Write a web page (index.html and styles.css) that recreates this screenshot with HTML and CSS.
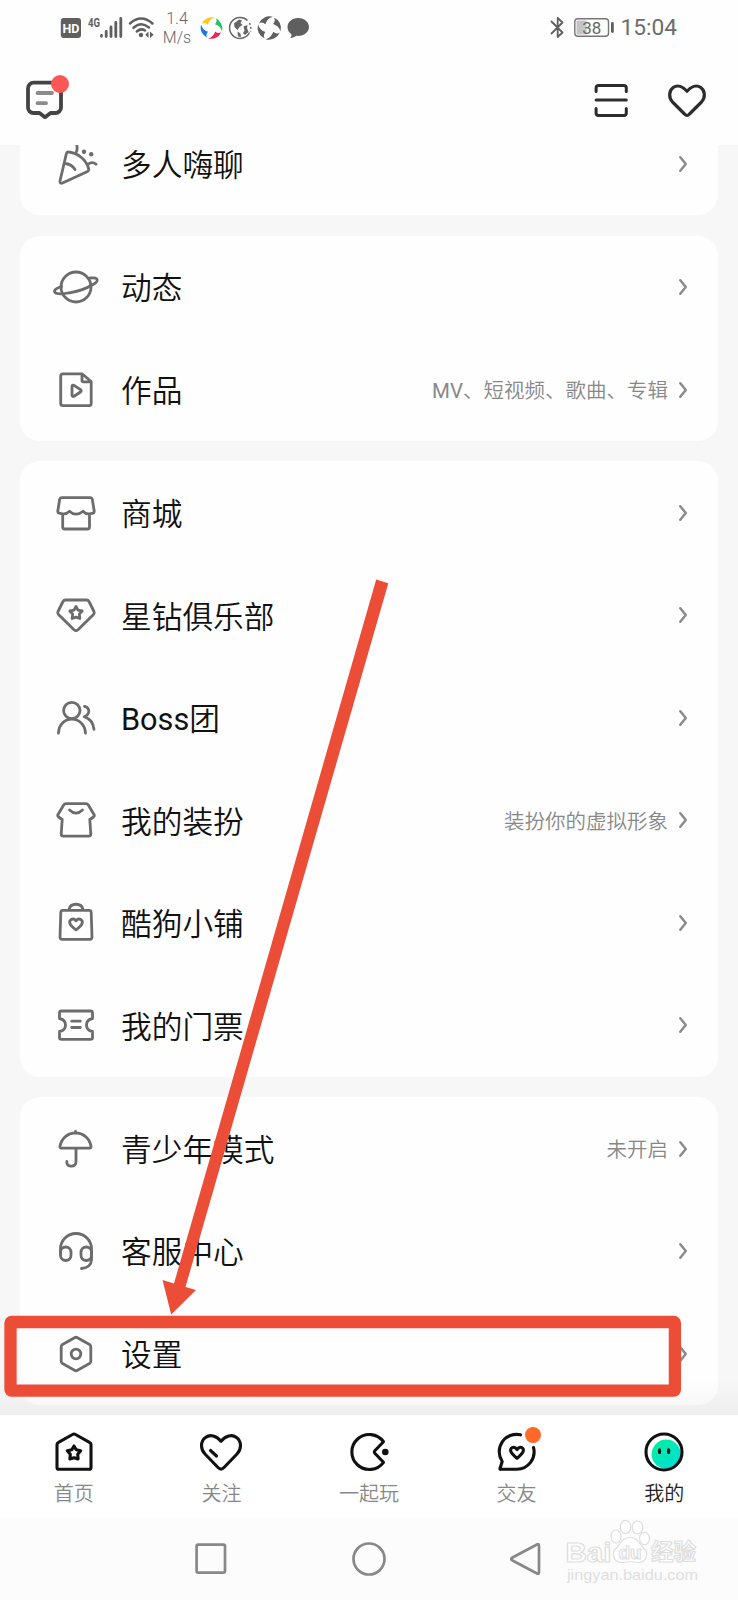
FILE: index.html
```html
<!DOCTYPE html>
<html lang="zh-CN">
<head>
<meta charset="utf-8">
<title>我的</title>
<link rel="stylesheet" href="styles.css">
</head>
<body>
<div class="screen">
  <header class="top">
    <div class="status">
      <svg class="status-signal" viewBox="60 0 96 56">
        <rect x="60.8" y="18" width="20.2" height="20" rx="3" fill="#5f5f5f"/>
        <text x="70.9" y="32.800" text-anchor="middle" class="hd">HD</text>
        <text x="88" y="26.500" class="net" textLength="12" lengthAdjust="spacingAndGlyphs">4G</text>
        <g stroke="#5f5f5f" stroke-width="2.800" stroke-linecap="round"><path d="M101.500 35.500v.8M106.200 31.500v5M111 27v9.500M115.800 22.500v14M120.800 18.500v18"/></g>
        <g fill="none" stroke="#5f5f5f" stroke-width="2.500" stroke-linecap="round"><path d="M130 23.500Q141 13.500 152.500 23.500M133.500 27.800Q141 21 149 27.500M136.800 31.500Q141 27.800 145 30.500"/></g>
        <circle cx="141" cy="35" r="2.200" fill="#5f5f5f"/>
        <path d="M148.500 31.500v6.500l-3.200-3.200zM150 38v-6.500l3.600 3.200z" fill="#5f5f5f"/>
      </svg>
      <div class="speed"><span>1.4</span><span>M/s</span></div>
      <svg class="status-apps" viewBox="200 0 112 56">
        <defs><path id="blade" d="M-10.300-2.500A10.800 10.800 0 0 1 1.500-10.800Q-3.500-8.500-4.200-2.800Q-7.500-5-10.300-2.500z"/></defs>
        <g transform="translate(211.500 28) rotate(10)">
          <use href="#blade" fill="#ffc916"/><use href="#blade" fill="#23c16b" transform="rotate(90)"/><use href="#blade" fill="#ee2157" transform="rotate(180)"/><use href="#blade" fill="#1678ea" transform="rotate(270)"/>
        </g>
        <g fill="none" stroke="#666"><path d="M247.500 20.500A10.500 10.500 0 1 0 249.500 32.500" stroke-width="1.500"/><path d="M249.500 23q2 4 1 8.500" stroke-width="1.500" stroke-dasharray="2 2"/></g>
        <path d="M234 23.500l5-4 3 1-1.500 2.500 2 2-3 2-2 3-3-3zM243.500 26.500l4-1.500-.5 3 1.500 4-3.500 3-2-2 1.500-2.500zM237.500 31.500l3 2 .5 3.500-3-.5z" fill="#666"/>
        <g fill="#5f5f5f" transform="translate(269.300 28) rotate(10) scale(1.080)">
          <use href="#blade"/><use href="#blade" transform="rotate(90)"/><use href="#blade" transform="rotate(180)"/><use href="#blade" transform="rotate(270)"/>
        </g>
        <path d="M298.200 18C292 18 287.500 22 287.500 27c0 3.200 1.500 5.600 3.900 7.200.3 1.700-.4 3-1.200 3.800 2.800-.1 4.600-1 6.100-2.200 7 .7 12.700-3.300 12.700-8.800 0-5-4.600-9-10.800-9z" fill="#5f5f5f"/>
      </svg>
      <svg class="status-right" viewBox="548 0 70 56">
        <path d="M551.500 21.500l11 11-4.800 4.500V18l4.800 4.500-11 11" fill="none" stroke="#5f5f5f" stroke-width="1.800" stroke-linejoin="round" stroke-linecap="round"/>
        <rect x="574.800" y="18.700" width="33.700" height="17.600" rx="3" fill="#fff" stroke="#777" stroke-width="1.400"/>
        <rect x="576.500" y="20.500" width="10" height="14" fill="#c4c4c4"/>
        <text x="591.700" y="33.700" text-anchor="middle" class="battery">38</text>
        <path d="M612.400 23.500v8" stroke="#5f5f5f" stroke-width="2.800" stroke-linecap="round"/>
      </svg>
      <span class="clock">15:04</span>
    </div>
    <div class="actions">
      <span class="message">
        <svg width="40" height="44" viewBox="25 78 40 44" fill="none" stroke-linecap="round" stroke-linejoin="round">
          <path d="M33.500 82.700h22a5.500 5.500 0 0 1 5.500 5.500v19.300a5.500 5.500 0 0 1-5.500 5.500H50.500L45 117.200 39.500 113H33.500a5.500 5.500 0 0 1-5.500-5.500V88.200a5.500 5.500 0 0 1 5.500-5.500z" stroke="#444" stroke-width="3.800"/>
          <path d="M37.500 93h14.500M37.500 103.200h8.500" stroke="#8b8b8b" stroke-width="3.800"/>
        </svg>
        <i class="dot"></i>
      </span>
      <svg class="scan" width="36" height="40" viewBox="593 80 36 40" fill="none" stroke="#2d2d2d" stroke-width="3" stroke-linecap="round" stroke-linejoin="round"><path d="M596.100 91.500V88q0-2.500 2.500-2.500h25.200q2.500 0 2.500 2.500v3.500M596.100 100h30.200M596.100 108.500v4.500q0 2.500 2.500 2.500h25.200q2.500 0 2.500-2.500v-4.500"/></svg>
      <svg width="42" height="40" viewBox="666 80 42 40" fill="none" stroke="#2d2d2d" stroke-width="3.200" stroke-linejoin="round"><path d="M687 91.200C683 86.500 677.500 84.500 673.200 87.500 668.500 91 668.700 98 672.500 102L684.500 114Q687 116.700 689.500 114L701.500 102C705.300 98 705.500 91 700.800 87.500 696.500 84.500 691 86.500 687 91.200z"/></svg>
    </div>
  </header>

  <main class="list">
    <section class="card">
      <div class="row">
        <svg class="icon" viewBox="-24 -24 48 48"><path d="M-7.500-12Q-9.200-12.200-9.600-10.500L-16 17Q-16.200 20-13.500 19L11.500 7.500Q13.200 6.500 12.600 4.500C10-4.500 2-11-7.500-12zM-10.500-.5Q-4 .5-1 5.500M.5-20Q1.800-16 .5-12.500M12 .3Q16-3 20 .2"/><g class="solid"><circle cx="8" cy="-12.200" r="2.200"/><circle cx="15.200" cy="-9.800" r="2.200"/></g></svg>
        <span class="title">多人嗨聊</span><svg class="chevron" viewBox="0 0 10 18"><path d="M2.300 2.300l5.500 6.700-5.500 6.700"/></svg>
      </div>
    </section>

    <section class="card">
      <div class="row">
        <svg class="icon" viewBox="-24 -24 48 48"><circle r="15"/><path d="M-14.500-.5C-20 1-22.500 3.500-21 5.500C-17.500 8.700 5 5 15-1.500C23-5.500 24-10 14-9"/></svg>
        <span class="title">动态</span><svg class="chevron" viewBox="0 0 10 18"><path d="M2.300 2.300l5.500 6.700-5.500 6.700"/></svg>
      </div>
      <div class="row">
        <svg class="icon" viewBox="-24 -24 48 48"><path d="M6-16.200H-13Q-15.300-16.200-15.300-14V13.500Q-15.300 15.700-13 15.700H13Q15.200 15.700 15.200 13.500V-8.500ZM6-16.200V-9.500Q6-8.200 7.500-8.200H15.200M-4-3.500V5Q-4 7.200-2 6.200L4.500 2Q6 .8 4.500-.3L-2-4.700Q-4-5.500-4-3.500z"/></svg>
        <span class="title">作品</span><span class="note"><span class="latin">MV</span>、短视频、歌曲、专辑</span><svg class="chevron" viewBox="0 0 10 18"><path d="M2.300 2.300l5.500 6.700-5.500 6.700"/></svg>
      </div>
    </section>

    <section class="card">
      <div class="row">
        <svg class="icon" viewBox="-24 -24 48 48"><path d="M-14.500-15.300H14.500Q16-15.300 16.300-13.800L18.200-2Q18.400 0 17 .2L13.500.8Q10 1.500 7-1.800Q3.500 1.200 0 1.200Q-3.500 1.200-6.500-1.800Q-10 1.500-13.500.8L-17 .2Q-18.400 0-18.200-2L-16.300-13.800Q-16-15.300-14.500-15.300zM-13.300 1V14Q-13.300 16-11.300 16H11.500Q13.500 16 13.500 14V1"/></svg>
        <span class="title">商城</span><svg class="chevron" viewBox="0 0 10 18"><path d="M2.300 2.300l5.500 6.700-5.500 6.700"/></svg>
      </div>
      <div class="row">
        <svg class="icon" viewBox="-24 -24 48 48"><path d="M-10.500-15H10.500Q12.200-15 13-13.500L18-3.500Q18.800-2 17.500-.5L2 14.800Q0 16.500-2 14.800L-17.500-.5Q-18.800-2-18-3.500L-13-13.500Q-12.200-15-10.500-15zM0-8.500L2-4.800 6.200-4 3.300-.9 3.900 3.500 0 2.200-3.900 3.500-3.300-.9-6.200-4-2-4.800z"/></svg>
        <span class="title">星钻俱乐部</span><svg class="chevron" viewBox="0 0 10 18"><path d="M2.300 2.300l5.500 6.700-5.500 6.700"/></svg>
      </div>
      <div class="row">
        <svg class="icon" viewBox="-24 -24 48 48"><circle cx="-4.200" cy="-7.500" r="8.200"/><path d="M-17.500 15.200C-17-3.500 8.500-3.500 9.500 15.200M8.500-11.700C14-10.500 14.500-3.500 8.200-1.200C14.500 1 17.500 5.500 18 11.300"/></svg>
        <span class="title"><span class="latin">Boss</span>团</span><svg class="chevron" viewBox="0 0 10 18"><path d="M2.300 2.300l5.500 6.700-5.500 6.700"/></svg>
      </div>
      <div class="row">
        <svg class="icon" viewBox="-24 -24 48 48"><path d="M-10-16.300H10Q11.500-16.300 12.300-15L18-5.500Q18.800-4 17.500-3L13.800-.5 14.800 14Q14.800 16.200 12.500 16.200H-12.500Q-14.800 16.200-14.800 14L-13.800-.5-17.500-3Q-18.800-4-18-5.500L-12.300-15Q-11.500-16.300-10-16.300zM-6.500-10Q0-3.800 6.500-10"/></svg>
        <span class="title">我的装扮</span><span class="note">装扮你的虚拟形象</span><svg class="chevron" viewBox="0 0 10 18"><path d="M2.300 2.300l5.500 6.700-5.500 6.700"/></svg>
      </div>
      <div class="row">
        <svg class="icon" viewBox="-24 -24 48 48"><path d="M-13-12.700H13Q15-12.700 15.200-10.700L16 14Q16 16.300 13.800 16.300H-13.800Q-16 16.300-16 14L-15.200-10.700Q-15-12.700-13-12.700zM-7-13.500C-5.500-20.500 5.500-20.500 7-13.500M0-2.200C-3-6-7.500-3-6 .8Q-5.200 3 0 7Q5.200 3 6 .8C7.500-3 3-6 0-2.200z"/></svg>
        <span class="title">酷狗小铺</span><svg class="chevron" viewBox="0 0 10 18"><path d="M2.300 2.300l5.500 6.700-5.500 6.700"/></svg>
      </div>
      <div class="row">
        <svg class="icon" viewBox="-24 -24 48 48"><path d="M-14.500-14H14.500Q16.500-14 16.500-12V-6.500C8.500-5 8.500 5 16.500 6.500V12.500Q16.500 14.300 14.500 14.300H-14.500Q-16.500 14.300-16.500 12.500V6.500C-8.500 5-8.500-5-16.500-6.500V-12Q-16.500-14-14.500-14zM-4.300-3.800H4.300M-4.300 2.500H4.300"/></svg>
        <span class="title">我的门票</span><svg class="chevron" viewBox="0 0 10 18"><path d="M2.300 2.300l5.500 6.700-5.500 6.700"/></svg>
      </div>
    </section>

    <section class="card">
      <div class="row">
        <svg class="icon" viewBox="-24 -24 48 48"><path d="M-14.500-.8Q-16.300-.8-16-2.700C-13-20.500 12-20.500 15-2.700Q15.300-.8 13.500-.8zM-.5-16V-17.500M0-.5V12.500Q0 17.200-4.700 17.200T-9.200 12.500"/></svg>
        <span class="title">青少年模式</span><span class="note">未开启</span><svg class="chevron" viewBox="0 0 10 18"><path d="M2.300 2.300l5.500 6.700-5.500 6.700"/></svg>
      </div>
      <div class="row">
        <svg class="icon" viewBox="-24 -24 48 48"><path d="M-15.500 3V-2A15.500 15.500 0 0 1 15.500-2V3"/><rect x="-15.500" y="-4" width="10.500" height="13.500" rx="5.200"/><rect x="5" y="-4" width="10.500" height="13.500" rx="5.200"/><path d="M15.500 3V9Q15 16.500 5.500 17.500"/></svg>
        <span class="title">客服中心</span><svg class="chevron" viewBox="0 0 10 18"><path d="M2.300 2.300l5.500 6.700-5.500 6.700"/></svg>
      </div>
      <div class="row">
        <svg class="icon" viewBox="-24 -24 48 48"><path d="M-1.500-16.300Q0-17.200 1.500-16.300L13.500-9.500Q14.800-8.700 14.800-7V7Q14.800 8.700 13.500 9.500L1.500 16.300Q0 17.200-1.500 16.300L-13.500 9.500Q-14.800 8.700-14.800 7V-7Q-14.800-8.700-13.500-9.500z"/><circle r="4.800"/></svg>
        <span class="title">设置</span><svg class="chevron" viewBox="0 0 10 18"><path d="M2.300 2.300l5.500 6.700-5.500 6.700"/></svg>
      </div>
    </section>
    <div class="fade"></div>
  </main>

  <nav class="tabs">
    <div class="tab"><svg viewBox="-24 -24 48 48"><path d="M-1.500-17.500Q0-18.500 1.500-17.500L15.500-9.700Q17-9 17-7.500V15.500Q17 17.300 15.200 17.300H-15.200Q-17 17.300-17 15.500V-7.500Q-17-9-15.500-9.700zM0-6L2.200-2.300 6.700-1.300 3.700 2.200 4.100 7 0 5.700-4.100 7-3.700 2.200-6.700-1.300-2.200-2.300z"/></svg><span>首页</span></div>
    <div class="tab"><svg viewBox="-24 -24 48 48"><path d="M0-10.700C-4.500-16.500-11-18-15.500-14.500C-21-10.500-20.500-2.500-16 2L-3 15.500Q0 18.700 3 15.500L16 2C20.500-2.500 21-10.500 15.500-14.500C11-18 4.500-16.500 0-10.700zM-10.500-1.500L-4.500 4"/></svg><span>关注</span></div>
    <div class="tab"><svg viewBox="-24 -24 48 48"><path d="M14.500-10.300A17.500 17.500 0 1 0 14.500 10.300L5.800 1.200Q4.800 0 5.800-1.200z"/><circle class="eye" cx="16.300" cy="0" r="3.300"/></svg><span>一起玩</span></div>
    <div class="tab"><svg viewBox="-24 -24 48 48"><path d="M3.500-17.200A17.400 17.400 0 0 0-14.800 9.500L-17 16.500Q-17.300 17.500-16 17.300H0A17.400 17.400 0 0 0 16.500-4.500M0-2.500C-3-6.800-7.800-4-6-.3Q-5.200 1.800 0 6.300Q5.200 1.800 6-.3C7.800-4 3-6.800 0-2.500z"/></svg><i class="badge"></i><span>交友</span></div>
    <div class="tab current"><svg viewBox="-24 -24 48 48">
      <defs><linearGradient id="face" x1="0" y1="0" x2="1" y2="1"><stop offset="0" stop-color="#00f29a"/><stop offset="1" stop-color="#00dbe0"/></linearGradient></defs>
      <circle class="face" cx="2.200" cy="2.200" r="14.600"/><circle r="18"/><path d="M-4.500-2.200V.4M4.600-2.200V.4"/></svg><span>我的</span></div>
  </nav>

  <footer class="system">
    <svg viewBox="0 0 36 36"><rect x="3.600" y="3.600" width="28.400" height="28" rx="1.500"/></svg>
    <svg viewBox="0 0 36 36"><circle cx="18" cy="18" r="15.500"/></svg>
    <svg viewBox="0 0 36 36"><path d="M28 3.500L3.500 16.500Q1 18 3.500 19.500L28 32.500Q30 33.500 30 31V5Q30 2.500 28 3.500z"/></svg>
  </footer>

  <svg class="watermark" viewBox="560 1516 140 72">
    <g fill="#fff" stroke="#dedede" stroke-width="1.200">
      <ellipse cx="616" cy="1536.500" rx="5" ry="6.500"/><ellipse cx="625.500" cy="1527" rx="5.300" ry="6.700"/><ellipse cx="637.500" cy="1527.500" rx="5.300" ry="6.500"/><ellipse cx="644.500" cy="1538.500" rx="5" ry="6.200"/>
      <path d="M630 1537.500C622 1537.500 620 1545 615.500 1549C611 1554 614 1563 622 1562.500Q630 1561 638 1562.500C646 1563 649 1554 644.500 1549C640 1545 638 1537.500 630 1537.500z"/>
      <text x="565.500" y="1561.500" class="wm-brand" textLength="46" lengthAdjust="spacingAndGlyphs">Bai</text>
      <text x="618.500" y="1559" class="wm-du" textLength="23">du</text>
      <text x="651" y="1560" class="wm-cn">经验</text>
    </g>
    <text x="567" y="1580" class="wm-url" textLength="131" lengthAdjust="spacingAndGlyphs">jingyan.baidu.com</text>
  </svg>

  <svg class="markup" viewBox="0 0 738 1600">
    <path d="M376.200 579.500L388.300 583.200 185.500 1287 196 1290 171.200 1314.500 162.500 1280 174 1283.500z" fill="#eb4d37"/>
    <rect x="10.500" y="1322" width="664.400" height="68.600" rx="1" fill="none" stroke="#eb4d37" stroke-width="12.300" stroke-linejoin="round"/>
  </svg>
</div>
</body>
</html>
```
FILE: styles.css
```css
* { box-sizing: border-box; }
body { margin: 0; background: #f7f7f7; font-family: Roboto, "Noto Sans CJK SC", sans-serif; font-weight: 350; }
svg { display: block; flex: none; }

.screen {
  position: relative;
  display: flex;
  flex-direction: column;
  width: 738px;
  height: 1600px;
  overflow: hidden;
}

/* Header */
.top { flex: none; height: 145.300px; background: #fefefe; }
.status { display: flex; height: 56px; padding: 0 60px; align-items: center; color: #666; }
.status-signal { width: 96px; height: 56px; }
.speed { display: flex; flex-direction: column; width: 42px; margin-right: 2px; padding-top: 1px; text-align: center; font-size: 16px; line-height: 18.500px; }
.status-apps { width: 112px; height: 56px; }
.status-right { width: 70px; height: 56px; margin-left: auto; }
.clock { width: 60px; padding-left: 2.500px; font-size: 22.700px; font-weight: 400; line-height: 56px; white-space: nowrap; color: #6c6c6c; }
.hd { font: 700 12.500px Roboto, sans-serif; fill: #fff; }
.net { font: 700 13px Roboto, sans-serif; fill: #5f5f5f; }
.battery { font: 400 17px Roboto, sans-serif; fill: #666; }

.actions { display: flex; align-items: center; height: 88px; padding: 0 30px 0 25px; }
.message { position: relative; margin-right: auto; }
.dot { position: absolute; left: 26px; top: -3.500px; width: 18px; height: 18px; border-radius: 50%; background: #fe5757; }
.scan { margin-right: 37px; }

/* Menu cards */
.list { position: relative; display: flex; flex-direction: column; justify-content: flex-end; gap: 20.500px; flex: 1; min-height: 0; padding: 0 20px 9.800px; overflow: hidden; }
.card { flex: none; border-radius: 20px; background: #fefefe; }
.row { display: flex; align-items: center; height: 102.550px; padding: 0 30px 0 32px; }
.icon { width: 48px; height: 48px; margin-right: 21px; fill: none; stroke: #6c6c6c; stroke-width: 2.800; stroke-linecap: round; stroke-linejoin: round; }
.icon .solid { fill: #6c6c6c; stroke: none; }
.title { flex: 1; padding-top: 4.500px; font-size: 30.700px; line-height: 40px; color: #111; white-space: nowrap; }
.note { padding-top: 3.500px; font-size: 20.500px; line-height: 30px; color: #888; white-space: nowrap; }
.latin { font-weight: 400; }
.chevron { width: 10px; height: 18px; margin-left: 10px; fill: none; stroke: #8b8b8b; stroke-width: 2.500; stroke-linecap: round; stroke-linejoin: round; }
.fade { position: absolute; left: 0; right: 0; bottom: 0; height: 36px; background: linear-gradient(rgba(0,0,0,0), rgba(0,0,0,.035)); }

/* Tab bar */
.tabs { display: flex; flex: none; height: 103.300px; background: #fff; }
.tab { position: relative; display: flex; flex: 1; flex-direction: column; align-items: center; padding-top: 13.500px; font-size: 20px; line-height: 30px; color: #888; }
.tab svg { width: 48px; height: 48px; margin-bottom: 2.500px; fill: none; stroke: #111; stroke-width: 3.100; stroke-linecap: round; stroke-linejoin: round; }
.tab .eye { fill: #111; stroke: none; }
.tab .face { fill: url(#face); stroke: none; }
.current { color: #222; }
.badge { position: absolute; left: 82px; top: 12px; width: 16.500px; height: 16.500px; border-radius: 50%; background: #ff6a2a; }

/* System navigation */
.system { display: flex; flex: none; justify-content: center; gap: 122px; height: 82px; padding-top: 23px; background: #fcfcfc; }
.system svg { width: 36px; height: 36px; fill: none; stroke: #888; stroke-width: 2.700; stroke-linejoin: round; }

/* Overlays */
.watermark { position: absolute; left: 560px; top: 1516px; width: 140px; height: 72px; }
.wm-brand { font: 700 28px "Liberation Sans", sans-serif; }
.wm-du { font: 700 19px "Liberation Sans", sans-serif; }
.wm-cn { font: 700 22.500px "Noto Sans CJK SC", sans-serif; }
.wm-url { font: 14.500px "Liberation Sans", sans-serif; fill: #dedede; }
.markup { position: absolute; left: 0; top: 0; width: 738px; height: 1600px; }
```
